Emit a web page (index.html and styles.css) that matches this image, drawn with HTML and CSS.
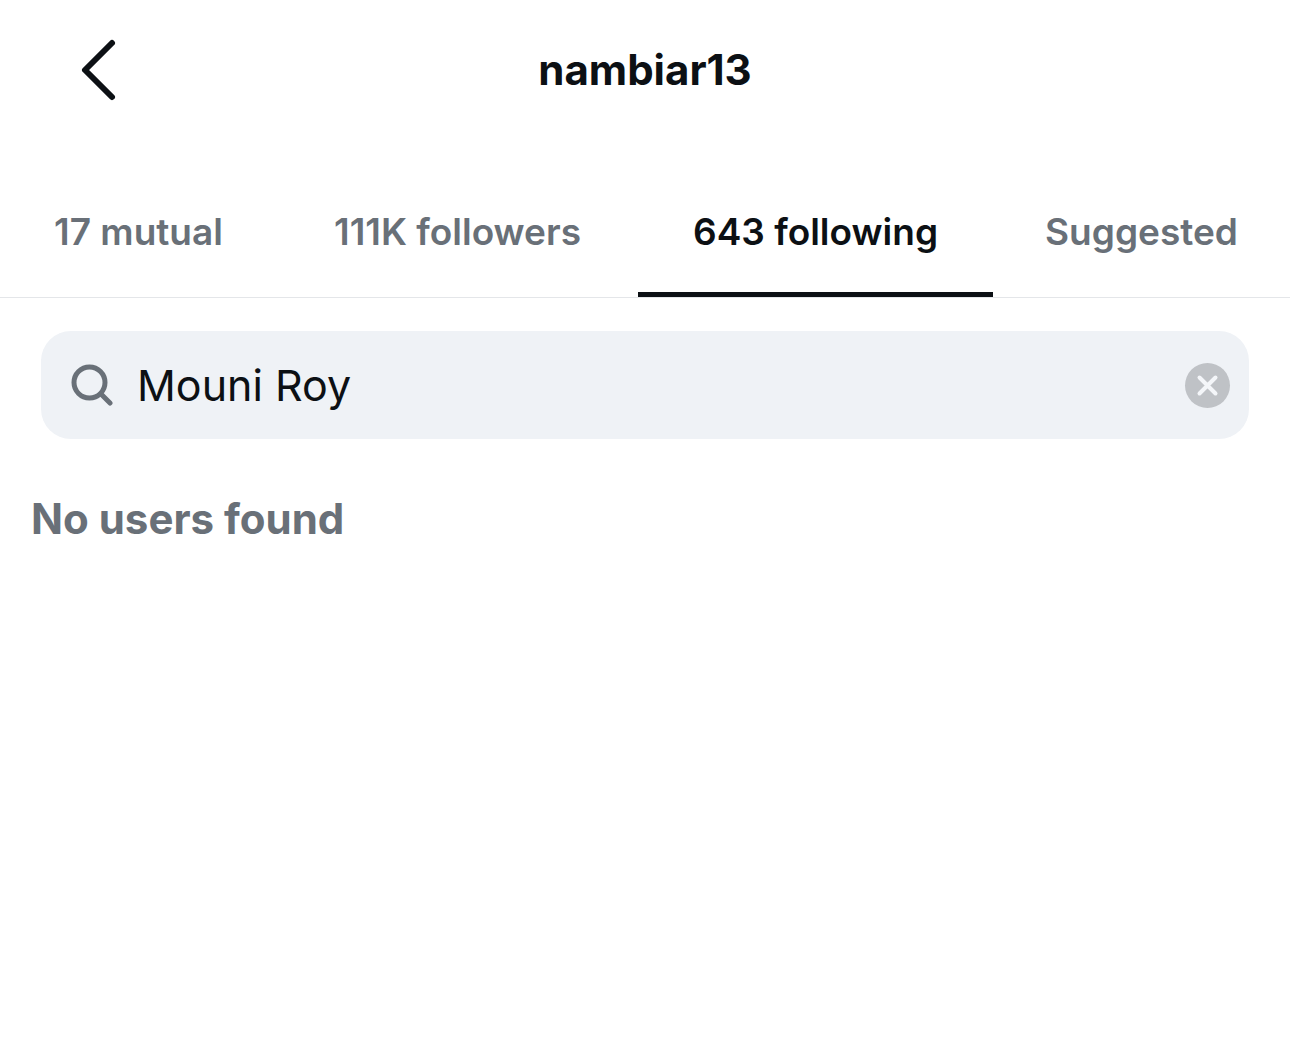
FILE: index.html
```html
<!DOCTYPE html>
<html lang="en">
<head>
<meta charset="utf-8">
<meta name="viewport" content="width=device-width, initial-scale=1">
<title>nambiar13</title>
<link rel="stylesheet" href="styles.css">
</head>
<body>
<header class="topbar">
  <button class="back" type="button" aria-label="Back">
    <svg class="back-icon" viewBox="0 0 40 64" aria-hidden="true"><path d="M34 5 7 32 34 59"/></svg>
  </button>
  <h1 class="title">nambiar13</h1>
</header>
<nav class="tabs">
  <a class="tab" href="#mutual">17 mutual</a>
  <a class="tab" href="#followers">111K followers</a>
  <a class="tab tab-active" href="#following" aria-current="page">643 following</a>
  <a class="tab" href="#suggested">Suggested</a>
</nav>
<main class="content">
  <form class="search" role="search">
    <svg class="search-icon" viewBox="0 0 42 42" aria-hidden="true"><circle cx="18.5" cy="18.5" r="15.5"/><path d="m30 30 9 9"/></svg>
    <input class="search-input" type="text" aria-label="Search" value="Mouni Roy">
    <button class="clear" type="reset" aria-label="Clear search">
      <svg class="clear-icon" viewBox="0 0 45 45" aria-hidden="true"><path d="m14.5 14.5 16 16M30.500 14.500l-16 16"/></svg>
    </button>
  </form>
  <p class="empty">No users found</p>
</main>
</body>
</html>
```

FILE: styles.css
```css
* { box-sizing: border-box; }

body {
  margin: 0;
  background: #fff;
  color: #0c1014;
  font-family: Inter, "Liberation Sans", sans-serif;
}

button {
  padding: 0;
  border: 0;
  background: none;
  cursor: pointer;
}

svg {
  display: block;
  fill: none;
  stroke: currentColor;
  stroke-linecap: round;
}

.topbar {
  display: grid;
  grid-template-columns: 1fr auto 1fr;
  align-items: center;
  height: 140px;
  padding: 0 78px;
}

.back {
  justify-self: start;
  color: #0c1014;
}

.back-icon {
  width: 40px;
  height: 64px;
  stroke-width: 6;
  stroke-linejoin: round;
}

.title {
  margin: 0;
  font-size: 42px;
  line-height: 52px;
  font-weight: 700;
}

.tabs {
  display: grid;
  grid-template-columns: 277fr 361fr 355fr 297fr;
  height: 158px;
  padding-top: 32px;
  border-bottom: 1px solid #e4e6e9;
}

.tab {
  display: flex;
  align-items: center;
  justify-content: center;
  border-bottom: 5px solid transparent;
  color: #697078;
  font-size: 37px;
  line-height: 44px;
  font-weight: 600;
  text-decoration: none;
  white-space: nowrap;
}

.tab-active {
  border-color: #0c1014;
  color: #0c1014;
}

.content { padding: 33px 41px; }

.search {
  display: flex;
  align-items: center;
  height: 108px;
  padding: 0 19px 0 30px;
  border-radius: 30px;
  background: #eff2f6;
}

.search-icon {
  width: 42px;
  height: 42px;
  color: #697078;
  stroke-width: 5;
}

.search-input {
  flex: 1;
  min-width: 0;
  height: 60px;
  margin: 0 24px;
  padding: 0;
  border: 0;
  outline: 0;
  background: none;
  color: #0c1014;
  font: 400 43px Inter, "Liberation Sans", sans-serif;
}

.clear {
  border-radius: 50%;
  background: #bfc2c6;
  color: #f4f6f9;
}

.clear-icon {
  width: 45px;
  height: 45px;
  stroke-width: 4;
}

.empty {
  margin: 54px -10px 0;
  color: #697078;
  font-size: 42px;
  line-height: 52px;
  font-weight: 700;
}
```
